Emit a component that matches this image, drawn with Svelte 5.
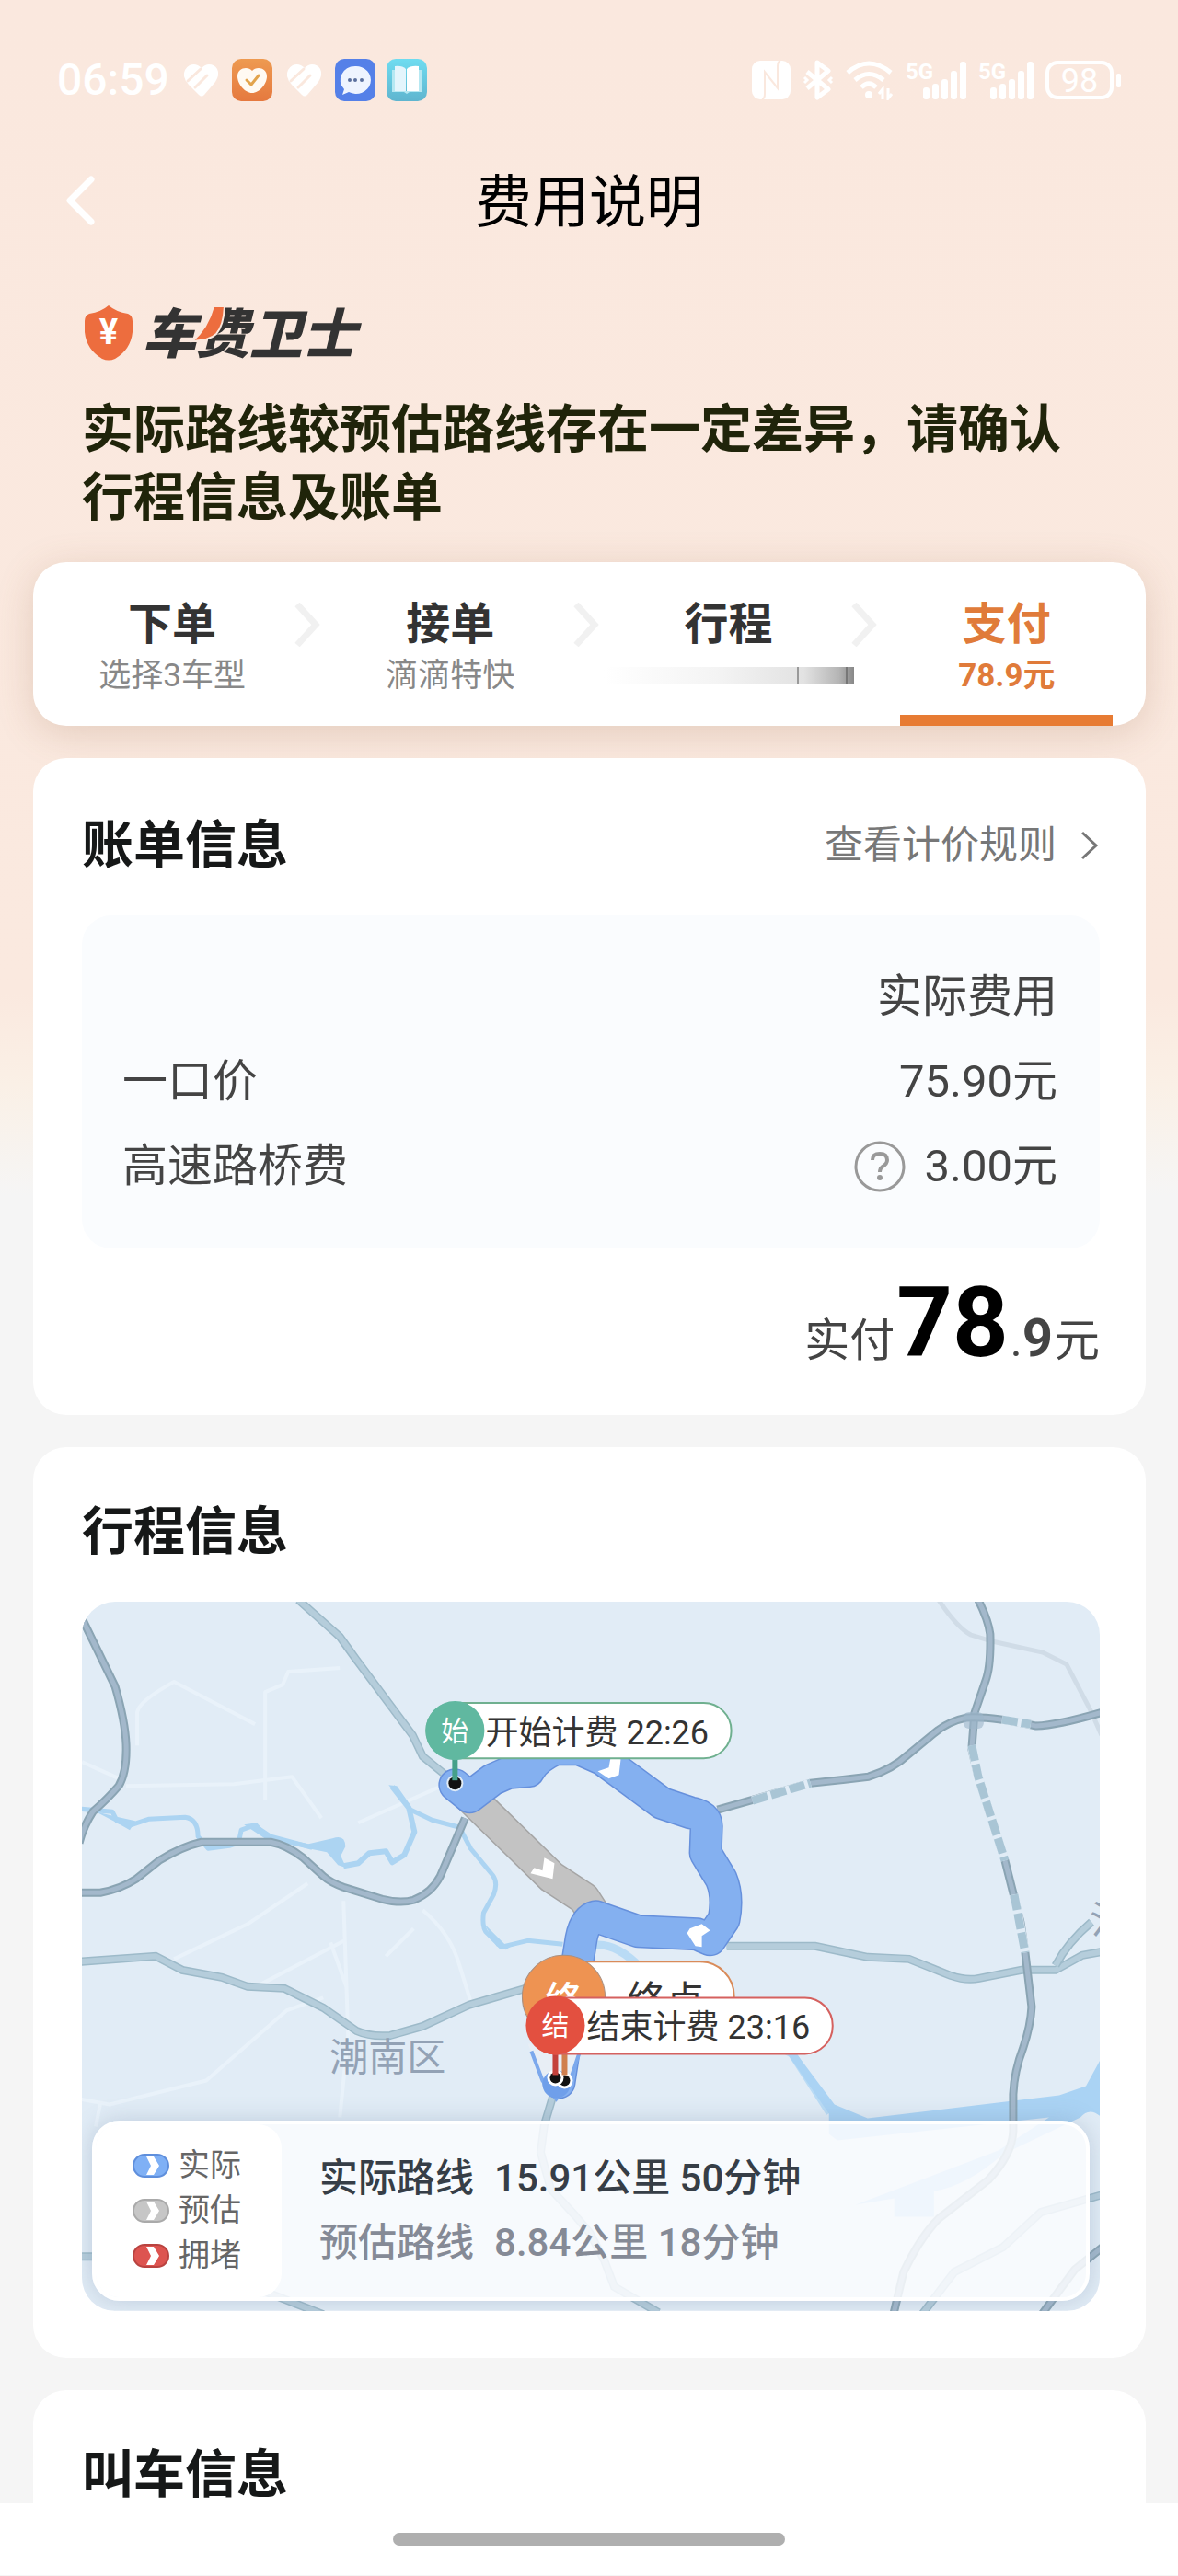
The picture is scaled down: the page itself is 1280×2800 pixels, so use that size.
<script>
  const steps = [
    { title: '下单', note: '选择3车型' },
    { title: '接单', note: '滴滴特快' },
    { title: '行程', masked: true },
    { title: '支付', note: '78.9元', active: true },
  ];

  const fees = [
    { label: '一口价', value: '75.90元' },
    { label: '高速路桥费', value: '3.00元', help: true },
  ];

  const legend = [
    { label: '实际', fill: '#7fb0f5', edge: '#5f8fdc' },
    { label: '预估', fill: '#c6c6c6', edge: '#aaaaaa' },
    { label: '拥堵', fill: '#dd5450', edge: '#b94340' },
  ];

  const routes = [
    { name: '实际路线', detail: '15.91公里 50分钟' },
    { name: '预估路线', detail: '8.84公里 18分钟', muted: true },
  ];

  // signal bars: x of the first bar, then a fixed step
  const signals = [
    { width: 66, first: 19 },
    { width: 60, first: 13 },
  ];
  const barTops = [30, 26, 21, 12, 2];

  // map geometry, in units of the 1105 x 770 map
  const highways = [
    'M1 20 L36 92 Q47 130 48 155 Q49 185 40 200 Q28 214 12 228 Q2 243 -3 262',
    'M-3 316 H20 Q42 312 59 301 L84 281 Q108 266 130 261 H205 Q222 264 240 278 L262 298 Q270 305 284 310 L326 323 Q346 328 360 324 Q380 316 389 298 L416 235',
    'M973 -2 Q984 20 986 35 Q987 70 981 86 L969 121 L966 160 L973 190 L1002 281 L1019 348 L1024 381 L1031 440 Q1030 460 1022 484 Q1012 510 1011 535 V575 Q1010 600 984 628 L930 670 Q910 690 892 728 L881 774',
    'M690 226 L729 215 L791 197 Q830 193 854 190 Q880 182 897 166 L925 143 Q940 130 960 126 Q985 124 1036 135 Q1060 134 1108 120',
    'M1108 701 L1078 725 L1042 774',
  ];
  const streets = [
    'M235 -2 L280 38 Q290 52 298 63 L359 145 L370 168 L397 190',
    'M-3 391 L80 385 L109 400 L152 408 L180 418 L220 420 L262 441 L298 466 Q314 473 335 471 L370 461 L420 438 L485 419',
    'M700 374 H796 L853 386 L898 388 L943 406 Q960 412 974 409 L1020 400 H1057 L1086 384 L1108 380',
    'M1057 395 Q1070 370 1096 348',
    'M511 538 L502 568 L498 598 L509 638 L534 665 L551 685 L567 715 L578 744 L626 772',
    'M1108 644 L1041 663 L1000 701 L947 728 L912 774',
    'M-3 711 H30 L180 742 L262 774',
  ];
  const lanes = [
    'M60 156 V120 Q62 108 100 87 L188 133 M199 215 V98 L218 90 L224 76 L280 72',
    'M48 200 L165 198 L228 190 L260 235 M0 174 L40 192',
    'M-3 540 L30 546 L135 520 L222 444 L262 430',
    'M100 388 L180 350 L245 306 M284 325 L289 470 L280 560 M370 335 Q400 360 410 395 L422 434',
    'M193 416 L285 368 M270 370 L287 418 M20 545 L15 570 M330 385 L360 355 M300 240 L400 196',
  ];
  const actual =
    'M405 199 L421 212 L446 193 L462 186 L485 184 Q492 170 514 160 L540 160 L565 171 L630 219 L660 229 Q679 232 678 245 L677 273 L694 301 Q702 320 697 345 L682 367 L668 361 L604 358 L558 342 Q546 345 542 366 L535 410 L518 522';
  const planned = 'M421 212 L510 299 L545 322 L554 336';
</script>

{#snippet stripedHeart()}
  <svg class="app-icon" viewBox="0 0 44 46" aria-hidden="true">
    <path d="M23 10 Q17 4 10 7 Q3 11 4 19 Q5 24 9 28 L20 39 Q23 42 26 39 L38 25 Q43 17 40 11 Q37 6 31 6 Q27 6 23 10Z" fill="#fff" />
    <path d="M8 24 L22 11 M16 31 L29 18" fill="none" stroke="#fae8de" stroke-width="3" stroke-linecap="round" />
  </svg>
{/snippet}

<div class="page">
  <div class="status-bar">
    <div class="status-group">
      <span class="clock">06:59</span>
      {@render stripedHeart()}
      <svg class="app-icon" viewBox="0 0 44 46" aria-hidden="true">
        <defs>
          <linearGradient id="orange" x2="0" y2="1">
            <stop stop-color="#ee9a50" /><stop offset="1" stop-color="#e5793f" />
          </linearGradient>
        </defs>
        <rect width="44" height="46" rx="10" fill="url(#orange)" />
        <path d="M22 13 C18 8 6 9 6 19 C6 27 14 37 22 37 C30 37 38 27 38 19 C38 9 26 8 22 13Z" fill="#fffaf2" />
        <path d="M16 23 L21 28 L29 18" fill="none" stroke="#e2a44c" stroke-width="3" stroke-linecap="round" stroke-linejoin="round" />
      </svg>
      {@render stripedHeart()}
      <svg class="app-icon" viewBox="0 0 44 46" aria-hidden="true">
        <rect width="44" height="46" rx="10" fill="#5480e8" />
        <path d="M22 8 A16 15 0 1 1 15 36 L8 39 L10 33 A16 15 0 0 1 22 8Z" fill="#eef4ff" />
        <g fill="#5a6f9e"><circle cx="16" cy="23" r="2" /><circle cx="22" cy="23" r="2" /><circle cx="29" cy="23" r="2" /></g>
      </svg>
      <svg class="app-icon" viewBox="0 0 44 46" aria-hidden="true">
        <defs>
          <linearGradient id="cyan" x2="0" y2="1">
            <stop stop-color="#6fdcf0" /><stop offset="1" stop-color="#5fb5cf" />
          </linearGradient>
        </defs>
        <rect width="44" height="46" rx="10" fill="url(#cyan)" />
        <path d="M6 12 H9 V35 H35 V12 H38 V36 H25 L22 38 L19 36 H6Z" fill="#b6e8f2" />
        <path d="M9 8 Q17 7 21 11 V35 H9Z" fill="#e4f5fc" />
        <path d="M35 8 Q26 7 22 11 V35 H35Z" fill="#fff" />
      </svg>
    </div>

    <div class="status-group status-group--right">
      <svg width="42" height="44" viewBox="0 0 42 44" aria-hidden="true">
        <rect y="1" width="42" height="42" rx="9" fill="#fff" />
        <path d="M11 43 Q14 42 14 37 V13 L26 28 M31 1 Q28 2 28 7 V31 L16 16" fill="none" stroke="#fae8de" stroke-width="2" />
      </svg>
      <svg width="34" height="44" viewBox="0 0 34 44" aria-hidden="true">
        <path d="M5 13 L28 32 L16 41 V3 L28 12 L5 31" fill="none" stroke="#fff" stroke-width="5" stroke-linejoin="round" />
        <path d="M2 19 L5 22 L2 25 M32 19 L29 22 L32 25" fill="none" stroke="#fff" stroke-width="3" />
      </svg>
      <svg width="52" height="44" viewBox="0 0 52 44" aria-hidden="true">
        <g fill="none" stroke="#fff" stroke-width="5">
          <path d="M2 14 Q25 -6 49 14" />
          <path d="M10 22 Q25 9 41 22" />
          <path d="M17 30 Q25 22 33 30" />
        </g>
        <circle cx="25" cy="38" r="4" fill="#fff" />
        <path d="M40 43 V32 L36 37 M46 31 V42 L50 37" fill="none" stroke="#fff" stroke-width="3" />
      </svg>
      {#each signals as signal}
        <svg width={signal.width} height="44" viewBox="0 0 {signal.width} 44" aria-hidden="true">
          <text class="net" x="0" y="21">5G</text>
          {#each barTops as top, i}
            <rect x={signal.first + i * 10} y={top} width="7" height={43 - top} rx="3" fill="#fff" />
          {/each}
        </svg>
      {/each}
      <svg width="84" height="44" viewBox="0 0 84 44" aria-label="98%">
        <rect x="2" y="3" width="70" height="38" rx="11" fill="none" stroke="#fff" stroke-width="4" />
        <rect x="77" y="15" width="5" height="15" rx="2" fill="#fff" />
        <text class="battery" x="37" y="35">98</text>
      </svg>
    </div>
  </div>

  <header class="nav">
    <button class="back" aria-label="返回">
      <svg width="34" height="56" viewBox="0 0 34 56" aria-hidden="true">
        <path d="M29 5 L6 28 L29 51" fill="none" stroke="#fff" stroke-width="7" stroke-linecap="round" stroke-linejoin="round" />
      </svg>
    </button>
    <h1>费用说明</h1>
  </header>

  <section class="intro">
    <svg class="brand" width="310" height="60" viewBox="0 0 310 60" role="img" aria-label="车费卫士">
      <path d="M29 0 Q37 7 50 9 Q55 11 55 17 V29 Q53 48 36 58 Q29 61 22 58 Q5 48 3 29 V17 Q3 11 8 9 Q21 7 29 0Z" fill="#ed6d3e" />
      <text class="yuan" x="29" y="42">¥</text>
      <text class="brand-name" x="66" y="52">车费卫士</text>
      <path d="M143 1 H155 Q154 22 146 31 Q139 38 120 39 Q137 24 143 1Z" fill="#ed6d3e" stroke="#fae8de" stroke-width="2" />
    </svg>
    <p class="headline">实际路线较预估路线存在一定差异，请确认行程信息及账单</p>
  </section>

  <ol class="card steps">
    {#each steps as step}
      <li class="step" class:step--active={step.active}>
        <strong>{step.title}</strong>
        {#if step.masked}
          <span class="mask"></span>
        {:else}
          <span class="note">{step.note}</span>
        {/if}
        {#if !step.active}
          <svg class="step-arrow" width="32" height="48" viewBox="0 0 32 48" aria-hidden="true">
            <path d="M5 2 L25 24 L5 46" fill="none" stroke="#f1f1f1" stroke-width="7" />
          </svg>
        {/if}
      </li>
    {/each}
  </ol>

  <section class="card bill">
    <div class="card-head">
      <h2>账单信息</h2>
      <a href="#rules" class="rules">
        查看计价规则
        <svg width="22" height="34" viewBox="0 0 22 34" aria-hidden="true">
          <path d="M3 3 L18 17 L3 31" fill="none" stroke="#777" stroke-width="3" />
        </svg>
      </a>
    </div>

    <div class="fees">
      <table>
        <thead>
          <tr><td></td><th scope="col">实际费用</th></tr>
        </thead>
        <tbody>
          {#each fees as fee}
            <tr>
              <th scope="row">{fee.label}</th>
              <td>
                <div class="amount">
                  {#if fee.help}
                    <button class="help" aria-label="费用说明">
                      <svg width="56" height="56" viewBox="0 0 56 56" aria-hidden="true">
                        <circle cx="28" cy="28" r="26" fill="none" stroke="#999" stroke-width="3" />
                        <path d="M20 21 Q20 14 28 14 Q36 14 36 21 Q36 25 31 28 Q28 30 28 34" fill="none" stroke="#999" stroke-width="4" />
                        <circle cx="28" cy="40" r="3" fill="#999" />
                      </svg>
                    </button>
                  {/if}
                  {fee.value}
                </div>
              </td>
            </tr>
          {/each}
        </tbody>
      </table>
    </div>

    <p class="total">
      <span>实付</span><b class="big">78</b><span>.</span><b class="cents">9</b><span>元</span>
    </p>
  </section>

  <section class="card trip">
    <div class="card-head">
      <h2>行程信息</h2>
    </div>

    <div class="map">
      <svg class="map-canvas" viewBox="0 0 1105 770" role="img" aria-label="行程路线">
        <rect width="1105" height="770" fill="#e1ecf6" />

        <!-- small lanes -->
        {#each lanes as d}
          <path {d} fill="none" stroke="#e9f2fa" stroke-width="4" stroke-linejoin="round" />
        {/each}
        <path d="M930 -2 Q950 28 965 36 L988 43 L1043 55 L1069 68 L1095 118 L1107 145" fill="none" stroke="#d0dce7" stroke-width="5" />

        <!-- rivers and sea -->
        <g fill="none" stroke="#acd4f2" stroke-width="5" stroke-linejoin="round">
          <path d="M-2 225 L33 228 L38 238 L52 243 L73 236 L112 234 Q126 236 126 255 L137 268 L160 265 L170 262 L173 248 L187 243 L205 255 L250 267" />
          <path d="M284 287 L300 284 L312 273 L330 271 L337 283 L350 275 L361 250 L355 224 L337 201" stroke-width="6" />
          <path d="M355 225 L380 237 L410 245 L422 268 L446 297 Q452 305 447 318 L436 338 Q434 355 440 360 L455 375 L484 368 L522 372" />
        </g>
        <path d="M15 228 L40 234 L58 238 L52 248 L38 240Z M176 242 L190 240 L202 254 L246 263 L272 257 Q286 252 286 266 L281 276 L287 289 L278 286 L266 272 L246 268 L200 258Z M437 350 L461 374 L470 372 L460 378 L450 374Z M333 199 L342 200 L356 220 L350 220Z" fill="#acd4f2" />
        <path d="M556 373 Q580 370 607 398 L771 491 L812 555" fill="none" stroke="#b9dbf5" stroke-width="9" />
        <path d="M766 491 L776 491 L817 546 L853 561 L1061 536 L1090 526 L1107 495 V560 Q1094 548 1084 560 L1000 600 Q960 635 925 640 V668 H882 V648 L840 655 L995 596 L1050 560 L820 585 L811 578 V556Z" fill="#aad3f4" />

        <!-- roads -->
        {#each streets as d}
          <path {d} fill="none" stroke="#9dbac9" stroke-width="9" />
          <path {d} fill="none" stroke="#b5cddb" stroke-width="6" />
        {/each}
        {#each highways as d}
          <path {d} fill="none" stroke="#8aa4b3" stroke-width="9" stroke-linejoin="round" />
          <path {d} fill="none" stroke="#a3b8cb" stroke-width="5" stroke-linejoin="round" />
        {/each}
        <rect x="957" y="120" width="22" height="18" rx="6" fill="#9db6ca" opacity="0.6" />
        <g fill="none">
          <path d="M728 216 L791 197 M999 128 L1030 133 M966 156 L973 190 L1002 281 M1012 318 L1024 381" stroke="#e1ecf6" stroke-width="10" />
          <path d="M728 216 L791 197 M999 128 L1030 133 M966 156 L973 190 L1002 281 M1012 318 L1024 381" stroke="#a9c5d5" stroke-width="9" stroke-dasharray="17 4" />
        </g>

        <text class="place" x="269" y="510">潮南区</text>
        <text class="place" x="1094" y="360">氵</text>

        <!-- routes -->
        <g fill="none" stroke-linecap="round" stroke-linejoin="round">
          <path d={planned} stroke="#a5a5a5" stroke-width="36" />
          <path d={planned} stroke="#c3c3c3" stroke-width="33" />
          <path d={actual} stroke="#6690dc" stroke-width="36" />
          <path d={actual} stroke="#84b0f0" stroke-width="33" />
        </g>
        <path d="M502 278 L513 284 L511 301 L487 295 L491 289 L500 292Z" fill="#fff" />
        <path d="M574 169 L585 171 L583 188 L572 192 L560 184 L572 180Z" fill="#fff" />
        <path d="M673 350 L682 357 L673 363 L673 375 L666 374 L657 360 L660 355Z" fill="#fff" />

        <!-- start pin -->
        <circle cx="405" cy="197" r="9" fill="#e1ecf6" />
        <circle cx="405" cy="197" r="7" fill="#111" />
        <path d="M402 165 H408 V194 H402Z" fill="#45a08a" />
        <rect x="374" y="110" width="331" height="60" rx="30" fill="#fff" stroke="#6fb08f" stroke-width="2" />
        <circle cx="405" cy="140" r="32" fill="#60b8a0" />
        <text class="pin-mark" x="405" y="151">始</text>
        <text class="pin-text" x="438" y="155">开始计费 22:26</text>

        <!-- destination and end pins -->
        <path d="M484 480 L502 520 H530 L542 480Z" fill="#e8eef5" />
        <path d="M488 488 L500 520 L515 540 L530 520 L540 490" fill="none" stroke="#7ba8ec" stroke-width="4" />
        <circle cx="515" cy="524" r="15" fill="#6f9fea" />
        <circle cx="524" cy="520" r="9" fill="#fff" />
        <circle cx="524" cy="520" r="6" fill="#111" />
        <circle cx="514" cy="517" r="9" fill="#fff" />
        <circle cx="514" cy="517" r="6" fill="#111" />
        <path d="M524 488 V514" stroke="#d07f4e" stroke-width="6" />
        <path d="M514 488 V514" stroke="#c4423c" stroke-width="6" />
        <rect x="490" y="391" width="218" height="78" rx="37" fill="#fff" stroke="#d98b5a" stroke-width="2" />
        <circle cx="523" cy="429" r="45" fill="#ee9352" stroke="#a88f80" stroke-width="1" />
        <text class="pin-mark pin-mark--big" x="523" y="447">终</text>
        <text class="pin-text pin-text--big" x="592" y="448">终点</text>
        <rect x="484" y="430" width="331" height="61" rx="30" fill="#fff" stroke="#d5615f" stroke-width="2" />
        <circle cx="514" cy="460" r="32" fill="#e35040" />
        <text class="pin-mark" x="514" y="471">结</text>
        <text class="pin-text" x="548" y="475">结束计费 23:16</text>
      </svg>

      <div class="summary">
        <ul class="legend">
          {#each legend as item}
            <li>
              <svg width="40" height="26" viewBox="0 0 40 26" aria-hidden="true">
                <rect x="1" y="1" width="38" height="24" rx="12" fill={item.fill} stroke={item.edge} stroke-width="2" />
                <path d="M15 3 H23 L29 13 L23 23 H15 L20 13Z" fill="#fff" />
              </svg>
              {item.label}
            </li>
          {/each}
        </ul>
        <div class="distances">
          {#each routes as route}
            <p class:muted={route.muted}><span>{route.name}</span><span>{route.detail}</span></p>
          {/each}
        </div>
      </div>
    </div>
  </section>

  <section class="card order">
    <h2>叫车信息</h2>
  </section>

  <footer class="home"><span class="home-bar"></span></footer>
</div>

<style>
  :global(body) {
    background: #f5f5f5;
  }

  .page {
    font-family: Roboto, 'Noto Sans CJK SC', sans-serif;
    color: #444;
    background: linear-gradient(#fae8de 0, #fae9df 1080px, #faf0e6 1180px, #f6f5f4 1290px, #f5f5f5 1300px);
  }

  h1, h2, p, ol, ul {
    margin: 0;
    padding: 0;
  }

  ol, ul {
    list-style: none;
  }

  button {
    padding: 0;
    border: none;
    background: none;
    cursor: pointer;
  }

  svg {
    display: block;
    flex: none;
  }

  /* ── Status bar ── */
  .status-bar {
    display: flex;
    justify-content: space-between;
    align-items: center;
    height: 46px;
    padding: 64px 60px 0 62px;
  }

  .status-group {
    display: flex;
    align-items: center;
    gap: 12px;
  }

  .status-group--right {
    gap: 13px;
  }

  .clock {
    font-size: 48px;
    font-weight: 500;
    line-height: 46px;
    color: #fff;
  }

  .app-icon {
    width: 44px;
    height: 46px;
  }

  .net {
    font-size: 24px;
    font-weight: 700;
    fill: #fff;
  }

  .battery {
    font-size: 36px;
    font-weight: 400;
    fill: #fff;
    text-anchor: middle;
  }

  /* ── Title bar ── */
  .nav {
    display: grid;
    grid-template-columns: 1fr auto 1fr;
    align-items: center;
    height: 108px;
    margin-top: 54px;
    padding: 0 70px;
  }

  .back {
    justify-self: start;
  }

  h1 {
    padding-top: 6px;
    font-size: 62px;
    font-weight: 400;
    line-height: 90px;
    color: #000;
  }

  /* ── Intro ── */
  .intro {
    padding: 60px 89px 33px;
  }

  .brand {
    overflow: visible;
  }

  .brand-name {
    font-size: 58px;
    font-weight: 900;
    font-style: italic;
    fill: #333;
  }

  .yuan {
    font-size: 38px;
    font-weight: 700;
    fill: #fff;
    text-anchor: middle;
  }

  .headline {
    margin-top: 38px;
    font-size: 56px;
    font-weight: 700;
    line-height: 74px;
    color: #20240a;
  }

  /* ── Cards ── */
  .card {
    margin: 0 35px 35px 36px;
    border-radius: 36px;
    background: #fff;
  }

  .card-head {
    display: flex;
    justify-content: space-between;
    align-items: center;
    margin-bottom: 45px;
  }

  h2 {
    font-size: 56px;
    font-weight: 700;
    line-height: 62px;
    color: #161818;
  }

  /* ── Steps ── */
  .steps {
    display: grid;
    grid-template-columns: repeat(4, 1fr);
    box-shadow: 0 8px 40px rgba(150, 100, 70, 0.22);
  }

  .step {
    position: relative;
    display: flex;
    flex-direction: column;
    align-items: center;
    height: 140px;
    padding-top: 38px;
  }

  .step strong {
    font-size: 48px;
    font-weight: 700;
    line-height: 60px;
    color: #333;
  }

  .note {
    font-size: 35px;
    line-height: 52px;
    color: #888;
  }

  .step--active strong,
  .step--active .note {
    font-weight: 700;
    color: #e07b3a;
  }

  .step--active::after {
    content: '';
    position: absolute;
    bottom: 0;
    width: 231px;
    height: 12px;
    background: #e77b33;
  }

  .step-arrow {
    position: absolute;
    top: 44px;
    right: -12px;
  }

  /* redacted driver line */
  .mask {
    width: 272px;
    height: 18px;
    margin-top: 16px;
    background:
      linear-gradient(#ccc, #ccc) 115px 0 / 1px 100% no-repeat,
      linear-gradient(#999, #999) 210px 0 / 2px 100% no-repeat,
      linear-gradient(#777, #777) 263px 0 / 2px 100% no-repeat,
      linear-gradient(90deg, #fff 0, #f4f4f4 45%, #e2e2e2 80%, #b5b5b5 94%, #888 100%);
  }

  /* ── Bill ── */
  .bill {
    padding: 64px 50px 23px 53px;
  }

  .rules {
    display: flex;
    align-items: center;
    gap: 25px;
    font-size: 42px;
    line-height: 60px;
    color: #777;
    text-decoration: none;
  }

  .fees {
    padding: 43px 46px 43px 44px;
    border-radius: 32px;
    background: #fafcfe;
  }

  table {
    width: 100%;
    border-collapse: collapse;
    font-size: 49px;
    line-height: 60px;
  }

  th, td {
    height: 92px;
    padding: 0;
    font-weight: 400;
    text-align: right;
    vertical-align: middle;
  }

  tbody th {
    text-align: left;
  }

  .amount {
    display: flex;
    justify-content: flex-end;
    align-items: center;
    gap: 20px;
  }

  .total {
    display: flex;
    justify-content: flex-end;
    align-items: baseline;
    margin-top: 24px;
    font-size: 49px;
    line-height: 114px;
  }

  .big {
    margin: 0 2px;
    font-size: 106px;
    color: #000;
  }

  .cents {
    margin-right: 2px;
    font-size: 58px;
  }

  /* ── Trip ── */
  .trip {
    padding: 61px 50px 51px 53px;
  }

  .map {
    position: relative;
    overflow: hidden;
    border-radius: 36px;
  }

  .map-canvas {
    width: 100%;
    height: auto;
  }

  .place {
    font-size: 42px;
    fill: #93a2b5;
  }

  .pin-text {
    font-size: 36px;
    fill: #333;
  }

  .pin-text--big {
    font-size: 42px;
  }

  .pin-mark {
    font-size: 30px;
    fill: #fff;
    text-anchor: middle;
  }

  .pin-mark--big {
    font-size: 40px;
    font-weight: 500;
  }

  .summary {
    position: absolute;
    right: 11px;
    bottom: 11px;
    left: 11px;
    box-sizing: border-box;
    display: flex;
    height: 196px;
    border: 4px solid #fff;
    border-radius: 30px;
    background: rgba(250, 251, 254, 0.86);
    box-shadow: 0 0 24px rgba(110, 130, 160, 0.3);
  }

  .legend {
    display: flex;
    flex-direction: column;
    justify-content: center;
    width: 162px;
    padding-left: 40px;
    border-radius: 26px;
    background: #fff;
  }

  .legend li {
    display: flex;
    align-items: center;
    gap: 10px;
    font-size: 34px;
    line-height: 49px;
    color: #666;
  }

  .distances {
    display: flex;
    flex-direction: column;
    justify-content: center;
    padding-left: 41px;
  }

  .distances p {
    display: flex;
    gap: 22px;
    font-size: 42px;
    font-weight: 500;
    line-height: 70px;
    color: #363e47;
  }

  .distances .muted {
    color: #858a96;
  }

  /* ── Order card, runs on under the home bar ── */
  .order {
    margin-bottom: 0;
    padding: 61px 50px 0 53px;
    border-radius: 36px 36px 0 0;
  }

  .home {
    display: flex;
    justify-content: center;
    height: 46px;
    padding-top: 32px;
    background: #fff;
  }

  .home-bar {
    width: 426px;
    height: 14px;
    border-radius: 7px;
    background: #afafaf;
  }
</style>
